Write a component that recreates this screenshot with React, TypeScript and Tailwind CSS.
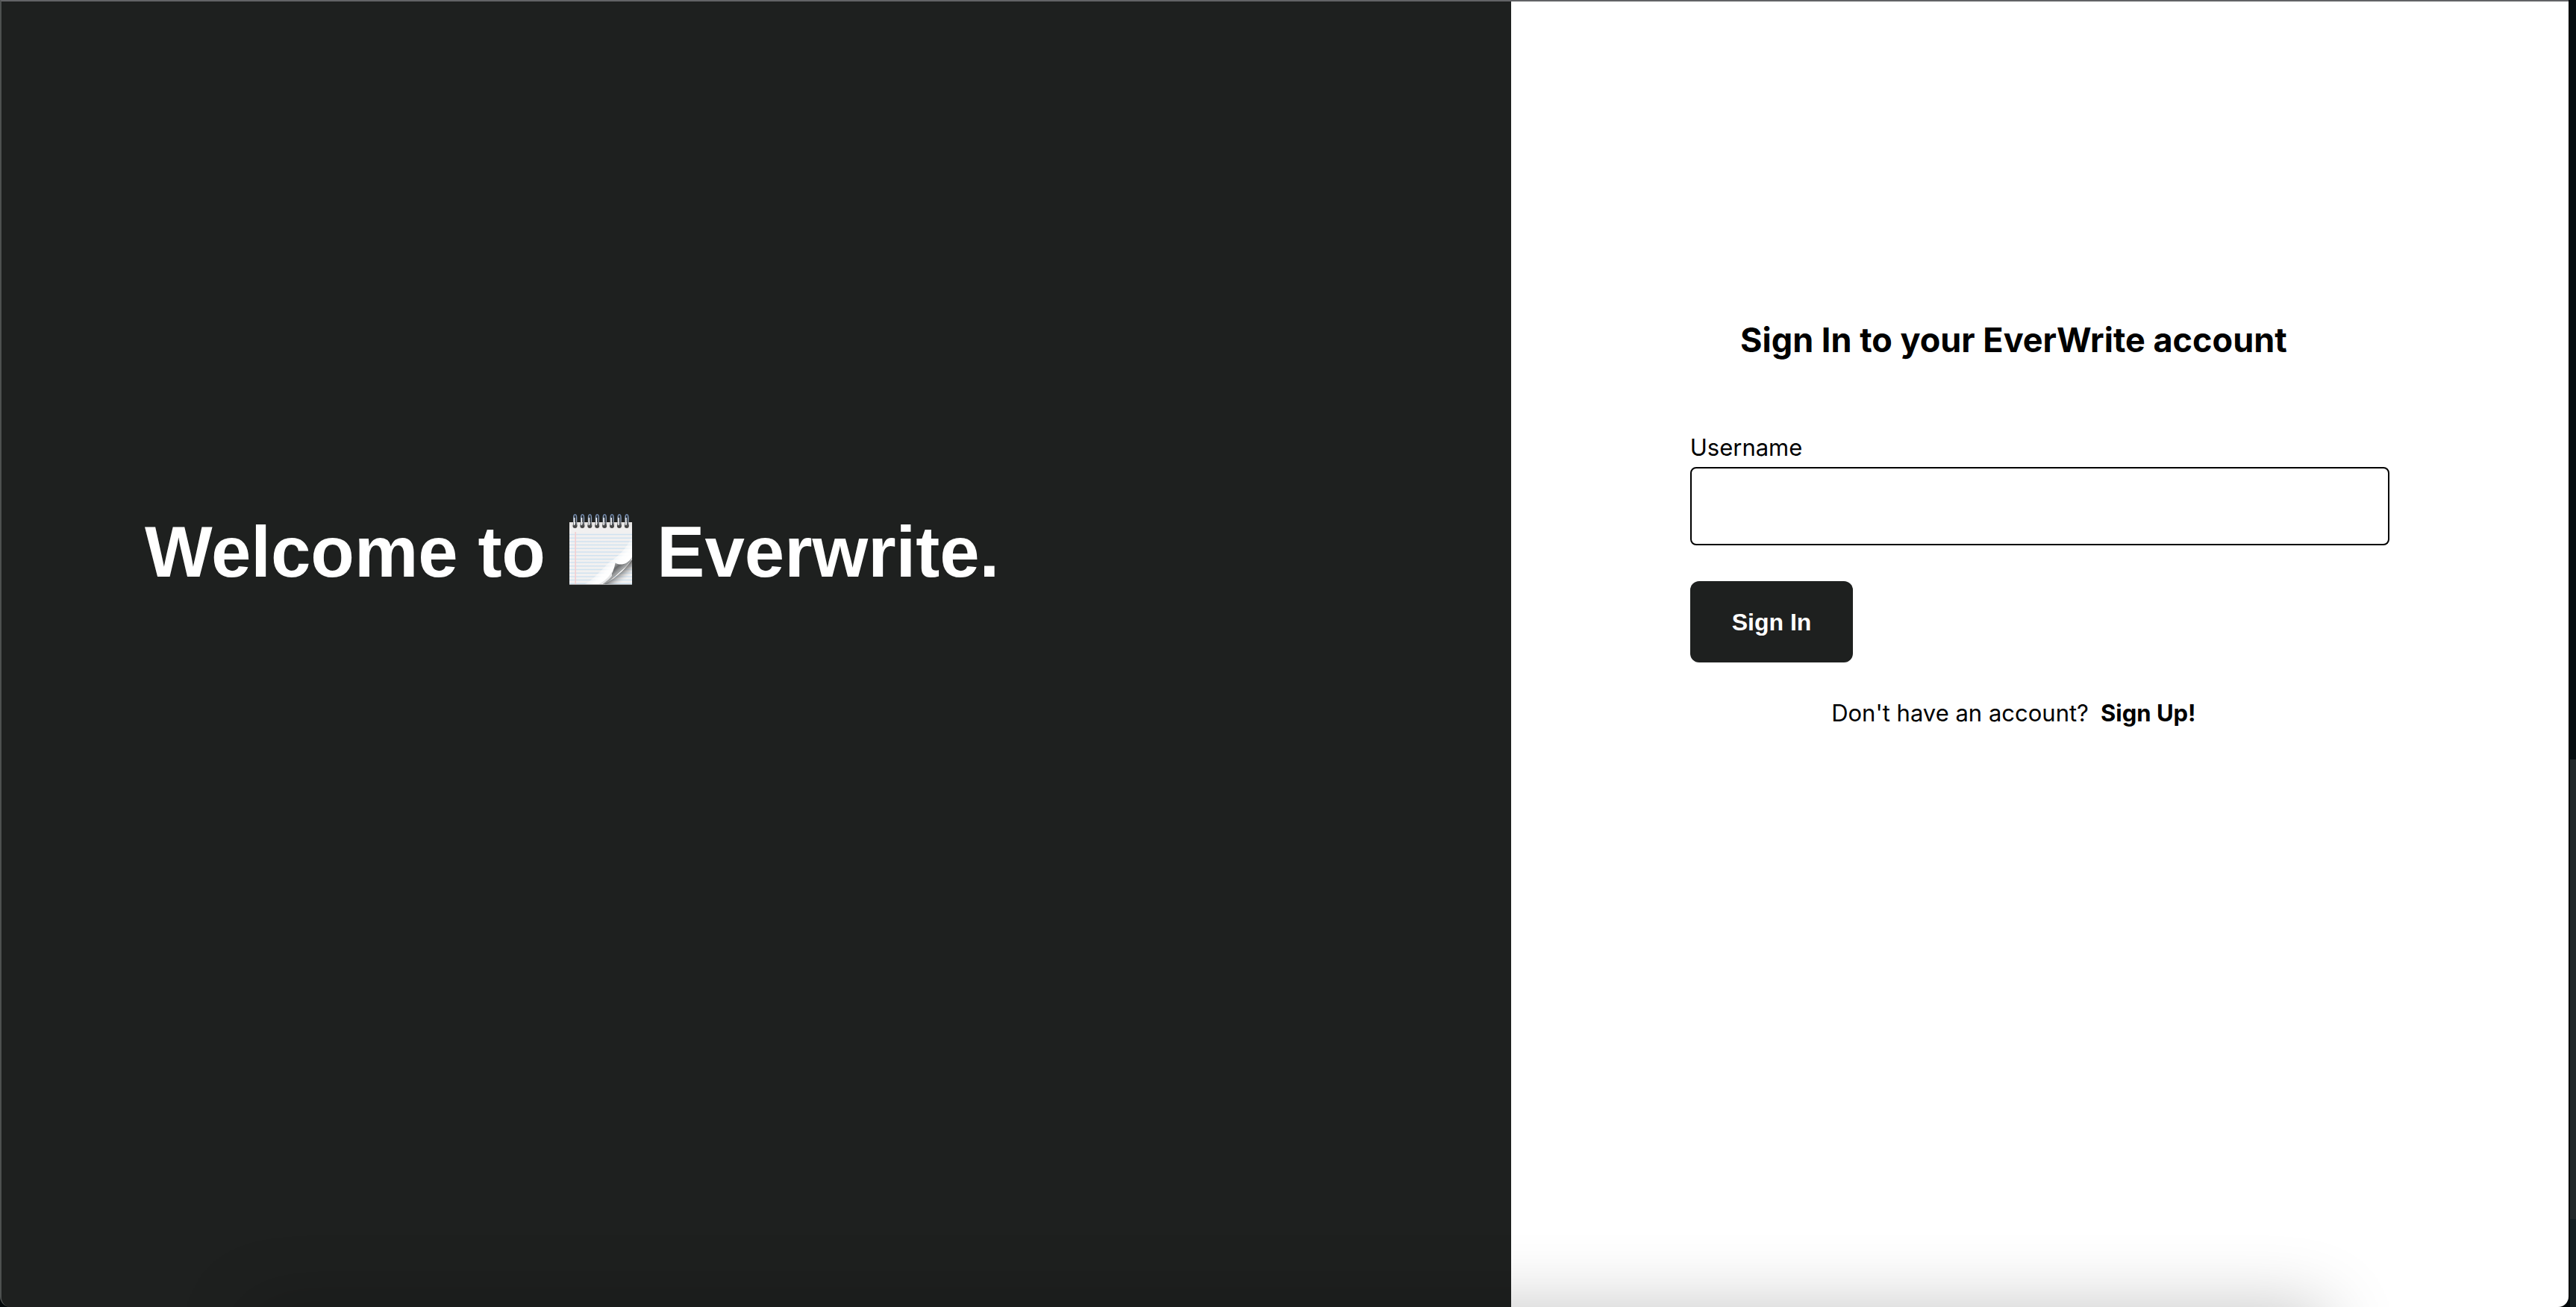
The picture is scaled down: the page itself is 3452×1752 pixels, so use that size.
const RINGS = [0, 1, 2, 3, 4, 5, 6, 7];
const RULES = Array.from({ length: 15 }, (_, i) => 28.5 + i * 4.7);

function Notepad() {
  return (
    <svg role="img" aria-label="notepad" viewBox="0 0 86 98" className="h-[98px] w-[86px]">
      <defs>
        <linearGradient id="paper" x1="0" y1="0" x2="0" y2="1">
          <stop offset="0" stopColor="#e4e2e1" />
          <stop offset="0.12" stopColor="#f1f0f0" />
          <stop offset="1" stopColor="#f2f1f1" />
        </linearGradient>
        <linearGradient id="ring" gradientUnits="userSpaceOnUse" x1="0" y1="0" x2="0" y2="18">
          <stop offset="0" stopColor="#5d7496" />
          <stop offset="0.4" stopColor="#8fa3bf" />
          <stop offset="0.7" stopColor="#8a8d92" />
          <stop offset="1" stopColor="#3c3c3c" />
        </linearGradient>
        <linearGradient id="sheen" gradientUnits="userSpaceOnUse" x1="49" y1="62" x2="62" y2="76">
          <stop offset="0" stopColor="#ffffff" stopOpacity="0" />
          <stop offset="0.7" stopColor="#ffffff" stopOpacity="0.9" />
          <stop offset="1" stopColor="#ffffff" />
        </linearGradient>
        <linearGradient id="curl" gradientUnits="userSpaceOnUse" x1="60" y1="70" x2="70" y2="82">
          <stop offset="0" stopColor="#a3a5a6" />
          <stop offset="0.3" stopColor="#66686a" />
          <stop offset="0.7" stopColor="#a4a6a7" />
          <stop offset="1" stopColor="#58595a" />
        </linearGradient>
        <linearGradient id="cast" gradientUnits="userSpaceOnUse" x1="66" y1="79" x2="75" y2="90">
          <stop offset="0" stopColor="#555555" stopOpacity="0.9" />
          <stop offset="0.5" stopColor="#8c8c8c" stopOpacity="0.45" />
          <stop offset="1" stopColor="#d0d0d0" stopOpacity="0" />
        </linearGradient>
      </defs>
      <rect x="1" y="12" width="84" height="84" fill="url(#paper)" />
      {RULES.map((y) => (
        <path key={y} d={`M1 ${y}H85`} stroke="#d0e2f0" strokeWidth="1.5" />
      ))}
      <path d="M9.2 25V96" stroke="#f3cfd1" strokeWidth="1.6" />
      <path d="M85 30C78 48 66 58 54 66C44 76 32 90 20 96H46L85 68Z" fill="url(#sheen)" />
      <path d="M44 96C58 91 72 80 85 62V96Z" fill="url(#cast)" />
      <path
        d="M62.5 66.5C68 70 78 70 85 59C84 66 74 74 67 80C58 88 52 94 44 96C52 91 60 82 62.5 66.5Z"
        fill="url(#curl)"
      />
      <path d="M58 84C52 91 47 95 38 96C47 92 54 86 58 78Z" fill="#e6e7e8" />
      <path d="M1 95.5H85" stroke="#a9a9a9" strokeWidth="1" />
      {RINGS.map((i) => (
        <g key={i} transform={`translate(${8.5 + i * 9.9} 0)`}>
          <circle cx="0" cy="17" r="3" fill="#454545" />
          <path d="M-1.7 17V5.5C-1.7 0.5 2 0.5 2 5.5V17" fill="none" stroke="url(#ring)" strokeWidth="1.6" />
          <path d="M0.8 4V15" stroke="#2c3440" strokeWidth="1" />
          <path d="M-0.8 6V16" stroke="#ffffff" strokeWidth="1.4" />
        </g>
      ))}
    </svg>
  );
}

export default function App() {
  return (
    <div className="relative flex min-h-screen overflow-hidden bg-[#03080a]">
      <div className="grid flex-1 grid-cols-[147fr_103fr] overflow-hidden rounded-b-[14px] border-t-2 border-l-2 border-t-[#626366] border-l-[#4d504f] bg-[#1e201f]">
        <section className="bg-[#1e201f] pt-[676px] pl-[192px]">
          <h1 className="flex items-start font-['Liberation_Sans',Arial,sans-serif] text-8xl leading-[124px] font-bold whitespace-pre text-white">
            <span>Welcome to </span>
            <span className="mr-1.5 ml-1 pt-2.5">
              <Notepad />
            </span>
            <span> Everwrite.</span>
          </h1>
        </section>

        <main className="bg-white px-[240px] pt-[424px] font-[Inter,sans-serif] text-[31px] leading-10 text-black">
          <h2 className="pr-[70px] text-center text-[45px] leading-[60px] font-bold whitespace-nowrap">
            Sign In to your EverWrite account
          </h2>
          <form className="mt-[94px] flex flex-col items-start" onSubmit={(e) => e.preventDefault()}>
            <label htmlFor="username">Username</label>
            <input
              id="username"
              type="text"
              className="mt-1.5 h-[105px] w-full rounded-lg border-2 border-black bg-white px-6 outline-none"
            />
            <button
              type="submit"
              className="mt-12 h-[109px] rounded-xl bg-[#1e201f] px-14 font-['Liberation_Sans',Arial,sans-serif] text-[32px] font-bold text-white"
            >
              Sign In
            </button>
          </form>
          <p className="mt-12 flex justify-center gap-4 pr-[70px] whitespace-nowrap">
            <span>Don't have an account?</span>
            <a href="#signup" className="font-bold">
              Sign Up!
            </a>
          </p>
        </main>
      </div>

      <div className="flex w-[10px] flex-col pl-[2px]">
        <div className="flex-[1018] bg-[#060d10]" />
        <div className="flex-[616] bg-[#22292b]" />
        <div className="flex-[118] bg-[#152023]" />
      </div>

      <div className="pointer-events-none absolute inset-x-[336px] top-full h-40 shadow-[0_0_96px_rgba(0,0,0,0.23)]" />
    </div>
  );
}
